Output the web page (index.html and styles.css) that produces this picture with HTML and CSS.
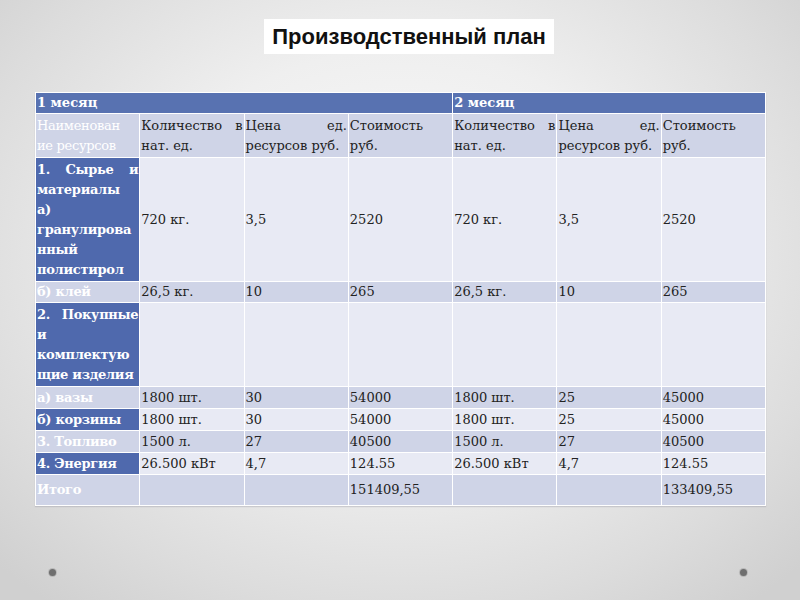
FILE: index.html
```html
<!DOCTYPE html>
<html lang="ru">
<head>
<meta charset="utf-8">
<title>Производственный план</title>
<link rel="stylesheet" href="styles.css">
</head>
<body>
<div class="slide">
  <div class="title-row"><h1 class="title">Производственный план</h1></div>
  <table class="plan">
    <colgroup>
      <col><col><col><col><col><col><col>
    </colgroup>
    <tr class="r-month">
      <td colspan="4" class="month">1 месяц</td>
      <td colspan="3" class="month">2 месяц</td>
    </tr>
    <tr class="r-head band">
      <td class="name"><span class="jl">Наименован</span>ие ресурсов</td>
      <td><span class="jl">Количество в</span>нат. ед.</td>
      <td><span class="jl">Цена ед.</span>ресурсов руб.</td>
      <td>Стоимость<br>руб.</td>
      <td><span class="jl">Количество в</span>нат. ед.</td>
      <td><span class="jl">Цена ед.</span>ресурсов руб.</td>
      <td>Стоимость<br>руб.</td>
    </tr>
    <tr class="r-raw light">
      <td class="name dark"><span class="jl">1. Сырье и</span>материалы<br>а)<br>гранулирова<br>нный<br>полистирол</td>
      <td>720 кг.</td><td>3,5</td><td>2520</td>
      <td>720 кг.</td><td>3,5</td><td>2520</td>
    </tr>
    <tr class="r-1 band">
      <td class="name">б) клей</td>
      <td>26,5 кг.</td><td>10</td><td>265</td>
      <td>26,5 кг.</td><td>10</td><td>265</td>
    </tr>
    <tr class="r-buy light">
      <td class="name dark"><span class="jl">2. Покупные</span>и<br>комплектую<br>щие изделия</td>
      <td></td><td></td><td></td><td></td><td></td><td></td>
    </tr>
    <tr class="r-2 band">
      <td class="name">а) вазы</td>
      <td>1800 шт.</td><td>30</td><td>54000</td>
      <td>1800 шт.</td><td>25</td><td>45000</td>
    </tr>
    <tr class="r-2 light">
      <td class="name dark">б) корзины</td>
      <td>1800 шт.</td><td>30</td><td>54000</td>
      <td>1800 шт.</td><td>25</td><td>45000</td>
    </tr>
    <tr class="r-2 band">
      <td class="name">3. Топливо</td>
      <td>1500 л.</td><td>27</td><td>40500</td>
      <td>1500 л.</td><td>27</td><td>40500</td>
    </tr>
    <tr class="r-2 light">
      <td class="name dark">4. Энергия</td>
      <td>26.500 кВт</td><td>4,7</td><td>124.55</td>
      <td>26.500 кВт</td><td>4,7</td><td>124.55</td>
    </tr>
    <tr class="r-total band">
      <td class="name">Итого</td>
      <td></td><td></td><td>151409,55</td>
      <td></td><td></td><td>133409,55</td>
    </tr>
  </table>
  <div class="footer">
    <span class="dot"></span>
    <span class="dot"></span>
  </div>
</div>
</body>
</html>
```

FILE: styles.css
```css
html, body {
  margin: 0;
  padding: 0;
}
body {
  width: 800px;
  height: 600px;
  overflow: hidden;
}
.slide {
  width: 800px;
  height: 600px;
  box-sizing: border-box;
  padding-top: 19px;
  background: radial-gradient(ellipse 70% 75% at 50% 42%, #fbfbfb 0%, #efefef 45%, #dcdcdc 80%, #d0d0d0 100%);
  display: flex;
  flex-direction: column;
}
.title-row {
  display: flex;
  justify-content: center;
  padding-left: 18px;
}
.title {
  margin: 0;
  background: #ffffff;
  font-family: "Liberation Sans", Arial, sans-serif;
  font-weight: bold;
  font-size: 22px;
  line-height: 35px;
  height: 35px;
  padding: 0 8px;
  color: #111;
}
.plan {
  margin: 38px 0 0 35px;
  width: 731px;
  table-layout: fixed;
  border-collapse: collapse;
  font-family: "DejaVu Serif", "Liberation Serif", serif;
  font-size: 13px;
  line-height: 20px;
  color: #222;
  box-shadow: 0 1px 1px rgba(150,150,160,0.35);
}
.plan td {
  border: 1px solid #ffffff;
  padding: 0 1px 0 1px;
  vertical-align: middle;
  text-align: left;
  overflow: hidden;
  white-space: nowrap;
}
.r-month { height: 21px; }
.r-head { height: 44px; }
.r-raw { height: 124px; }
.r-1 { height: 21px; }
.r-buy { height: 84px; }
.r-2 { height: 22px; }
.r-total { height: 31px; }

.month {
  background: #5872b1;
  color: #ffffff;
  font-weight: bold;
}
.band td { background: #cfd4e7; }
.light td { background: #e8eaf4; }
.plan .name {
  color: #ffffff;
  font-weight: bold;
  letter-spacing: -0.3px;
}
.plan .name.dark { background: #4f69ad; }
.r-head .name { font-weight: normal; }
.jl {
  display: block;
  text-align: justify;
  text-align-last: justify;
  white-space: normal;
}
.footer {
  margin-top: auto;
  margin-bottom: 24px;
  display: flex;
  justify-content: space-between;
  padding: 0 53px 0 49px;
}
.dot {
  width: 7px;
  height: 7px;
  border-radius: 50%;
  background: #6f6f6f;
  box-shadow: 0 0 0 1px #b8b8b8;
}
```
